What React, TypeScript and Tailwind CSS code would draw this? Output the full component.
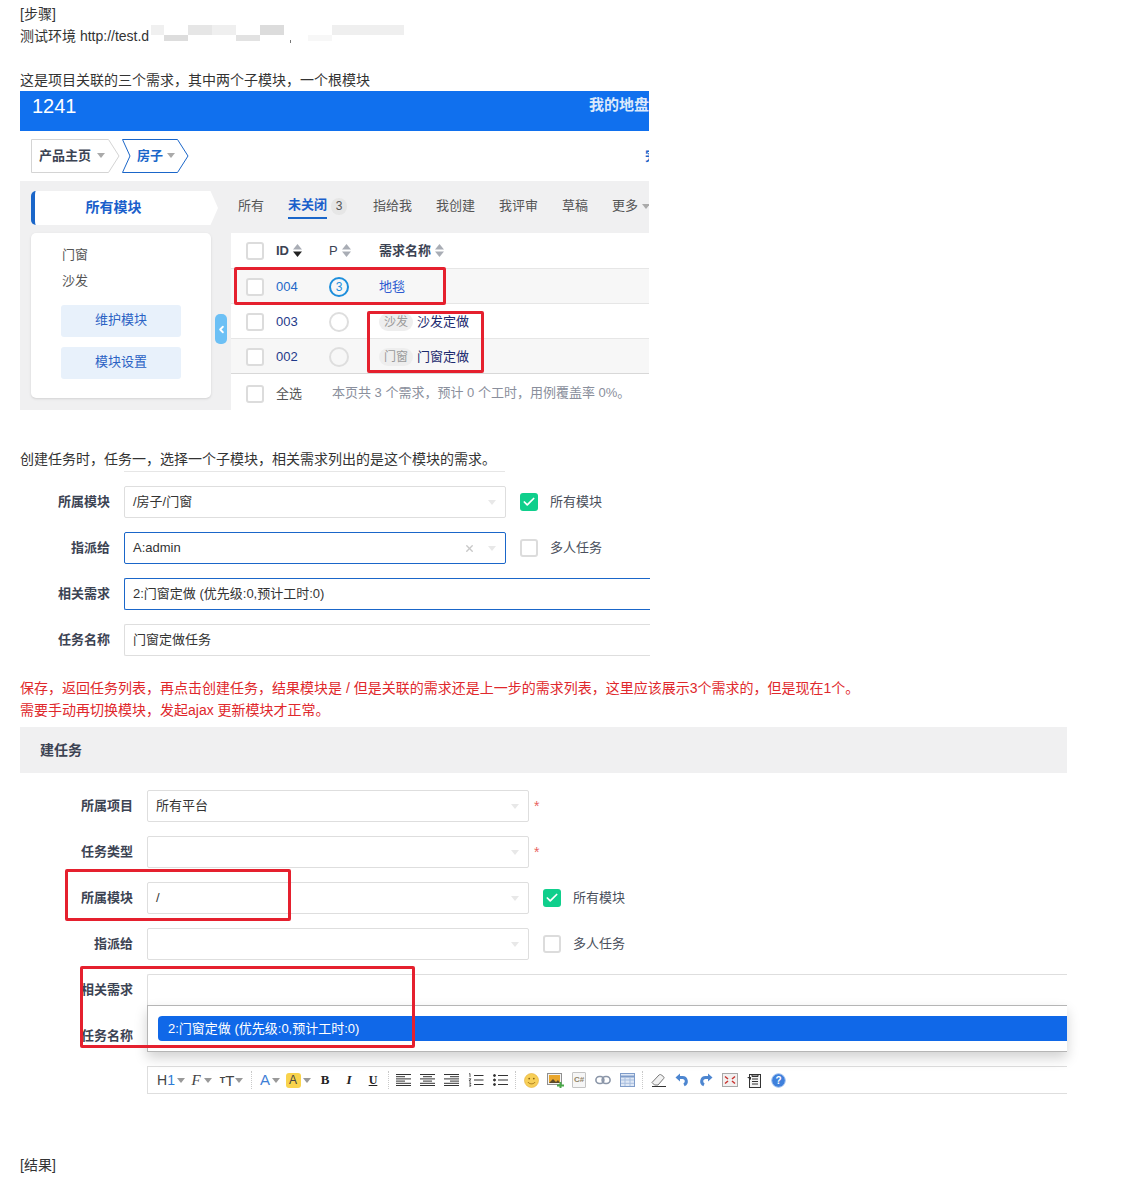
import { Check, ChevronLeft, X } from "lucide-react"

function Caret({ className = "text-[#c8c8c8]" }: { className?: string }) {
    return (
        <svg width="8" height="5" viewBox="0 0 8 5" className={`shrink-0 ${className}`}>
            <path d="M0 0h8L4 5z" fill="currentColor" />
        </svg>
    )
}

function Sort({ down = false }: { down?: boolean }) {
    return (
        <svg width="9" height="13" viewBox="0 0 9 13" className="ml-1 shrink-0">
            <path d="M0 5.5h9L4.5 0z" fill="#a9adb5" />
            <path d="M0 7.5h9L4.5 13z" fill={down ? "#222" : "#a9adb5"} />
        </svg>
    )
}

function Box({ checked = false }: { checked?: boolean }) {
    if (checked) {
        return (
            <span className="flex h-[18px] w-[18px] shrink-0 items-center justify-center rounded-[3px] bg-[#0fcf8c]">
                <Check size={14} strokeWidth={3} className="text-white" />
            </span>
        )
    }
    return <span className="block h-[18px] w-[18px] shrink-0 rounded-[3px] border-2 border-[#dcdcdc] bg-white" />
}

function Select({ value, focus = false, clear = false }: { value?: string; focus?: boolean; clear?: boolean }) {
    return (
        <div className={`flex h-[32px] w-[382px] shrink-0 items-center rounded-[2px] border bg-white pl-[8px] pr-[9px] text-[13px] text-[#333] ${focus ? "border-[#1a66c9]" : "border-[#dedede]"}`}>
            <span className="flex-1">{value}</span>
            {clear && <X size={11} strokeWidth={3} className="mr-[13px] text-[#c8c8c8]" />}
            <Caret className="text-[#e8e8e8]" />
        </div>
    )
}

function Row({ label, labelWidth, children }: { label: string; labelWidth: string; children?: React.ReactNode }) {
    return (
        <div className="flex h-[32px] items-center">
            <span className={`${labelWidth} mr-[14px] shrink-0 whitespace-nowrap text-right text-[13px] font-bold text-[#3c4353]`}>{label}</span>
            {children}
        </div>
    )
}

function CheckLabel({ label, checked = false }: { label: string; checked?: boolean }) {
    return (
        <div className="ml-[14px] flex items-center gap-[12px] text-[13px] text-[#4a4f5c]">
            <Box checked={checked} />
            <span>{label}</span>
        </div>
    )
}

function Star() {
    return <span className="ml-[5px] text-[14px] text-[#e8645f]">*</span>
}

function TableRow({ id, idColor, pri, shade = false, children }: { id: string; idColor: string; pri?: string; shade?: boolean; children: React.ReactNode }) {
    return (
        <div className={`flex h-[35px] items-center border-t border-[#e6e6e6] pl-[15px] pt-[1px] text-[13px] ${shade ? "bg-[#f7f7f7]" : "bg-white"}`}>
            <Box />
            <span className={`ml-[12px] w-[53px] ${idColor}`}>{id}</span>
            {pri ? (
                <span className="flex h-[20px] w-[20px] items-center justify-center rounded-full border-2 border-[#1e8fdc] text-[12px] text-[#1e8fdc]">{pri}</span>
            ) : (
                <span className="block h-[20px] w-[20px] rounded-full border-2 border-[#dedede]" />
            )}
            <span className="ml-[30px] flex items-center">{children}</span>
        </div>
    )
}

function ModuleTag({ name }: { name: string }) {
    return <span className="mr-[4px] rounded-full bg-[#eeeeee] px-[5px] text-[12px] leading-[18px] text-[#9a9a9a]">{name}</span>
}

function Lines({ rows, className = "text-[#333]" }: { rows: [number, number][]; className?: string }) {
    return (
        <svg width="16" height="14" viewBox="0 0 16 14" className={className}>
            {rows.map(([a, b], i) => (
                <path key={i} d={`M${a} ${1.5 + i * 2.2}H${b}`} stroke="currentColor" strokeWidth="1" />
            ))}
        </svg>
    )
}

function Sep({ className = "mx-[3px]" }: { className?: string }) {
    return <span className={`${className} h-[18px] w-0 shrink-0 border-l border-dotted border-[#c9c9c9]`} />
}

function Tool({ w = "w-[24px]", children }: { w?: string; children: React.ReactNode }) {
    return <span className={`flex ${w} shrink-0 items-center justify-center`}>{children}</span>
}

function Toolbar() {
    const left: [number, number][] = [[0, 15], [0, 9], [0, 15], [0, 9], [0, 15], [0, 15]]
    const center: [number, number][] = [[0, 15], [3, 12], [0, 15], [3, 12], [0, 15], [0, 15]]
    const right: [number, number][] = [[0, 15], [6, 15], [0, 15], [6, 15], [0, 15], [0, 15]]
    return (
        <div className="flex h-[28px] items-center border border-r-0 border-[#dedede] bg-white pl-[8px] text-[#444]">
            <Tool w="w-[30px]">
                <span className="text-[14px]">H<span className="text-[#2d7bd6]">1</span></span>
                <span className="ml-[2px]"><Caret className="text-[#999]" /></span>
            </Tool>
            <Tool w="w-[31px]">
                <span className="[font-family:'Liberation_Serif',serif] text-[15px] italic">F</span>
                <span className="ml-[3px]"><Caret className="text-[#999]" /></span>
            </Tool>
            <Tool w="w-[29px]">
                <span className="text-[9px] font-bold leading-none">T</span>
                <span className="text-[15px] leading-none">T</span>
                <span className="ml-[1px]"><Caret className="text-[#999]" /></span>
            </Tool>
            <Sep className="mx-[5px]" />
            <Tool w="w-[26px]">
                <span className="text-[15px] text-[#3f7fd6]">A</span>
                <span className="ml-[2px]"><Caret className="text-[#999]" /></span>
            </Tool>
            <Tool w="w-[30px]">
                <span className="flex h-[15px] w-[15px] items-center justify-center rounded-[3px] bg-[#f9d34c] text-[12px]">A</span>
                <span className="ml-[2px]"><Caret className="text-[#999]" /></span>
            </Tool>
            <Tool><b className="[font-family:'Liberation_Serif',serif] text-[13px] text-[#222]">B</b></Tool>
            <Tool><b className="[font-family:'Liberation_Serif',serif] text-[13px] italic text-[#222]">I</b></Tool>
            <Tool><b className="[font-family:'Liberation_Serif',serif] text-[12px] text-[#222] underline">U</b></Tool>
            <Sep />
            <Tool><Lines rows={left} /></Tool>
            <Tool><Lines rows={center} /></Tool>
            <Tool><Lines rows={right} /></Tool>
            <Tool>
                <svg width="16" height="14" viewBox="0 0 16 14" fill="none" stroke="#333">
                    <path d="M6 2.5h9.5M6 7h9.5M6 11.5h9.5" />
                    <path d="M1 1l1-.5V4M.8 5.8h2.2L1 8h2M1 10h2L2 11.5l1 1.5H1" strokeWidth=".8" />
                </svg>
            </Tool>
            <Tool>
                <svg width="15" height="14" viewBox="0 0 15 14" fill="none" stroke="#333">
                    <path d="M5 2.5h10M5 7h10M5 11.5h10" />
                    <circle cx="1.5" cy="2.5" r="1" fill="#333" />
                    <circle cx="1.5" cy="7" r="1" fill="#333" />
                    <circle cx="1.5" cy="11.5" r="1" fill="#333" />
                </svg>
            </Tool>
            <Sep />
            <Tool>
                <svg width="15" height="15" viewBox="0 0 15 15">
                    <circle cx="7.5" cy="7.5" r="7" fill="#f7cf58" stroke="#e4ad34" strokeWidth=".6" />
                    <circle cx="5.2" cy="5.6" r=".9" fill="#8a6414" />
                    <circle cx="9.8" cy="5.6" r=".9" fill="#8a6414" />
                    <path d="M4 9c1 2.4 6 2.4 7 0" fill="none" stroke="#a4761a" />
                </svg>
            </Tool>
            <Tool>
                <svg width="17" height="15" viewBox="0 0 17 15">
                    <rect x=".5" y=".5" width="14" height="11" fill="#f3f3f3" stroke="#8f8f8f" />
                    <rect x="2" y="2" width="11" height="8" fill="#e9a62c" />
                    <path d="M2 10l4-4 3 3 2-2 2 3z" fill="#5d4a2a" />
                    <path d="M10 11.5h2.5V9h2v2.5H17v2h-2.500V15h-2v-1.500H10z" fill="#4aa84a" />
                </svg>
            </Tool>
            <Tool>
                <span className="flex h-[16px] w-[14px] items-center justify-center rounded-[1px] border border-[#c4c4c4] bg-[#f6f6f6] text-[8px] font-bold text-[#8f8468]">C#</span>
            </Tool>
            <Tool>
                <svg width="16" height="10" viewBox="0 0 16 10" fill="none" stroke="#8b96a8" strokeWidth="1.600">
                    <rect x=".9" y="1.500" width="8" height="7" rx="3.500" />
                    <rect x="7.100" y="1.500" width="8" height="7" rx="3.500" />
                </svg>
            </Tool>
            <Tool>
                <svg width="15" height="14" viewBox="0 0 15 14">
                    <rect x=".5" y=".5" width="14" height="13" fill="#dfe8f5" stroke="#7f9cc9" />
                    <path d="M.5 3.500h14" stroke="#7f9cc9" strokeWidth="2" />
                    <path d="M5 4v9M10 4v9M1 7h13M1 10.300h13" stroke="#a9bfdf" />
                </svg>
            </Tool>
            <Sep />
            <Tool>
                <svg width="15" height="14" viewBox="0 0 15 14">
                    <path d="M1 9.500l7-7.500c.8-.6 1.500-.6 2.200-.1l2.300 1.700c.7.6.7 1.300.1 2L7 12H3.500z" fill="#f2f2f2" stroke="#777" />
                    <path d="M1 13.500h14" stroke="#333" />
                </svg>
            </Tool>
            <Tool>
                <svg width="14" height="15" viewBox="0 0 14 15" fill="none">
                    <path d="M4 4.500h3.500a3.800 3.800 0 0 1 1.500 7.300" stroke="#4d86d0" strokeWidth="3" />
                    <path d="M5 .5v8L.5 4.500z" fill="#4d86d0" />
                </svg>
            </Tool>
            <Tool>
                <svg width="14" height="15" viewBox="0 0 14 15" fill="none">
                    <path d="M10 4.500H6.500a3.800 3.800 0 0 0-1.500 7.300" stroke="#4d86d0" strokeWidth="3" />
                    <path d="M9 .5v8l4.500-4z" fill="#4d86d0" />
                </svg>
            </Tool>
            <Tool>
                <svg width="16" height="14" viewBox="0 0 16 14">
                    <rect x=".5" y=".5" width="15" height="13" fill="#f2f0f0" stroke="#a8a8a8" />
                    <path d="M3 3.500l3 2.500M13 3.500l-3 2.500M3 10.500l3-2.500M13 10.500l-3-2.500" stroke="#c8332f" strokeWidth="1.500" />
                </svg>
            </Tool>
            <Tool>
                <svg width="14" height="15" viewBox="0 0 14 15">
                    <rect x="2.500" y="1.500" width="11" height="13" fill="#f3f3f3" stroke="#333" />
                    <path d="M5 1.500h6v2H5zM5 6h6M5 8.500h6M5 11h6" stroke="#333" fill="#999" />
                    <path d="M0 4l4 3v-3z" fill="#333" />
                </svg>
            </Tool>
            <Tool>
                <svg width="15" height="15" viewBox="0 0 15 15">
                    <circle cx="7.500" cy="7.500" r="6.800" fill="#3e80dc" stroke="#9fc0ee" />
                    <text x="7.500" y="11" textAnchor="middle" fontSize="10" fontWeight="bold" fill="#fff">?</text>
                </svg>
            </Tool>
        </div>
    )
}

function RedBox({ className }: { className: string }) {
    return <div className={`pointer-events-none absolute z-20 rounded-[2px] border-[3px] border-[#e5202e] ${className}`} />
}

export default function App() {
    return (
        <div className="relative min-h-[1179px] w-[1136px] overflow-hidden bg-white pl-[20px] pt-[3px] text-[14px] leading-[22px] text-[#333] [font-family:'Liberation_Sans','Noto_Sans_CJK_SC',sans-serif]">
            <div>[步骤]</div>
            <div className="relative">
                测试环境 http://test.d
                {/* redacted host */}
                <svg width="260" height="22" viewBox="0 0 260 22" className="absolute left-[131px] top-0">
                    <rect x="0" y="0" width="13" height="10" fill="#f0f0f0" />
                    <rect x="13" y="10" width="24" height="6" fill="#dddddd" />
                    <rect x="37" y="0" width="24" height="10" fill="#e6e6e6" />
                    <rect x="61" y="0" width="24" height="10" fill="#efefef" />
                    <rect x="85" y="10" width="24" height="6" fill="#e2e2e2" />
                    <rect x="109" y="0" width="24" height="10" fill="#dcdcdc" />
                    <rect x="139" y="15" width="1" height="3" fill="#777777" />
                    <rect x="157" y="10" width="24" height="6" fill="#f7f7f7" />
                    <rect x="181" y="0" width="72" height="10" fill="#efefef" />
                </svg>
            </div>
            <div className="h-[22px]" />
            <div>这是项目关联的三个需求，其中两个子模块，一个根模块</div>

            {/* product page shot */}
            <div className="w-[629px] overflow-hidden">
                <div className="flex h-[40px] items-start justify-between bg-[#1070ee] pl-[12px] text-white">
                    <span className="text-[20px] leading-[30px]">1241</span>
                    <span className="w-[60px] overflow-hidden whitespace-nowrap pt-[3px] text-[15px] font-bold text-[#dce9fb]">我的地盘</span>
                </div>
                <div className="flex h-[50px] items-center pl-[11px]">
                    <div className="relative flex h-[34px] w-[89px] shrink-0 items-center pb-[1px] pl-[8px] text-[13px] font-bold text-[#3c4353]">
                        <svg width="89" height="34" viewBox="0 0 89 34" className="absolute left-0 top-0">
                            <path d="M.5.500h77L88 17 77.500 33.500H.5z" fill="#fff" stroke="#d4d4d4" />
                        </svg>
                        <span className="relative">产品主页</span>
                        <span className="relative ml-[6px]"><Caret className="text-[#aaa]" /></span>
                    </div>
                    <div className="relative ml-[2px] flex h-[34px] w-[67px] shrink-0 items-center pb-[1px] pl-[15px] text-[13px] font-bold text-[#1a66c9]">
                        <svg width="67" height="34" viewBox="0 0 67 34" className="absolute left-0 top-0">
                            <path d="M.5.500h55L66 17 55.500 33.500H.5L8 17z" fill="#fff" stroke="#1a66c9" />
                        </svg>
                        <span className="relative">房子</span>
                        <span className="relative ml-[4px]"><Caret className="text-[#aaa]" /></span>
                    </div>
                    <span className="ml-[456px] shrink-0 whitespace-nowrap pb-[1px] text-[13px] font-bold text-[#1a66c9]">完</span>
                </div>
                <div className="flex h-[229px] bg-[#f0f0f1]">
                    <div className="relative w-[211px] shrink-0 pl-[11px] pt-[10px]">
                        <div className="flex h-[34px] w-[187px] items-center justify-center rounded-l-[5px] border-l-4 border-[#1a66c9] bg-white pb-[2px] pr-[26px] text-[14px] font-bold text-[#1a5fcb] [clip-path:polygon(0_0,96%_0,100%_50%,96%_100%,0_100%)]">
                            所有模块
                        </div>
                        <div className="mt-[8px] h-[165px] w-[180px] rounded-[5px] bg-white pl-[31px] pt-[9px] text-[13px] leading-[26px] text-[#555] shadow-sm">
                            <div>门窗</div>
                            <div>沙发</div>
                            <div className="-ml-[1px] mt-[11px] flex h-[32px] w-[120px] items-center justify-center rounded-[3px] bg-[#e8f1fb] pb-[2px] text-[#2b62c4]">维护模块</div>
                            <div className="-ml-[1px] mt-[10px] flex h-[32px] w-[120px] items-center justify-center rounded-[3px] bg-[#e8f1fb] pb-[2px] text-[#2b62c4]">模块设置</div>
                        </div>
                        <div className="absolute left-[195px] top-[133px] flex h-[30px] w-[12px] items-center justify-center rounded-[5px] bg-[#6cc0f5] text-white">
                            <ChevronLeft size={11} strokeWidth={4} />
                        </div>
                    </div>
                    <div className="min-w-0 flex-1">
                        <div className="flex h-[52px] items-center gap-[24px] pb-[2px] pl-[7px] text-[13px] text-[#555]">
                            <span className="shrink-0">所有</span>
                            <span className="flex shrink-0 items-center">
                                <span className="border-b-2 border-[#1a66c9] font-bold leading-[24px] text-[#1a5fcb]">未关闭</span>
                                <span className="ml-[4px] mr-[2px] flex h-[17px] w-[16px] items-center justify-center rounded-full bg-[#e6e6e6] text-[12px] text-[#555]">3</span>
                            </span>
                            <span className="shrink-0">指给我</span>
                            <span className="shrink-0">我创建</span>
                            <span className="shrink-0">我评审</span>
                            <span className="shrink-0">草稿</span>
                            <span className="flex shrink-0 items-center gap-[4px]">更多<Caret className="text-[#aaa]" /></span>
                        </div>
                        <div className="h-[177px] bg-white">
                            <div className="flex h-[35px] items-center pl-[15px] text-[13px] font-bold text-[#3c4353]">
                                <Box />
                                <span className="ml-[12px] flex w-[53px] items-center">ID<Sort down /></span>
                                <span className="flex w-[50px] items-center font-normal">P<Sort /></span>
                                <span className="flex items-center">需求名称<Sort /></span>
                            </div>
                            <TableRow id="004" idColor="text-[#2468c8]" pri="3" shade>
                                <span className="text-[#2d5bd0]">地毯</span>
                            </TableRow>
                            <TableRow id="003" idColor="text-[#1f3a8a]">
                                <ModuleTag name="沙发" />
                                <span className="text-[#1c2a6e]">沙发定做</span>
                            </TableRow>
                            <TableRow id="002" idColor="text-[#1f3a8a]" shade>
                                <ModuleTag name="门窗" />
                                <span className="text-[#1c2a6e]">门窗定做</span>
                            </TableRow>
                            <div className="flex h-[37px] items-center border-t border-[#d8d8d8] pl-[15px] pt-[4px] text-[13px]">
                                <Box />
                                <span className="ml-[12px] w-[56px] text-[#555]">全选</span>
                                <span className="-mt-[2px] whitespace-nowrap text-[#8a8f9c]">本页共 3 个需求，预计 0 个工时，用例覆盖率 0%。</span>
                            </div>
                        </div>
                    </div>
                </div>
            </div>

            <div className="mt-[38px]">创建任务时，任务一，选择一个子模块，相关需求列出的是这个模块的需求。</div>
            <div className="ml-[104px] mt-[1px] h-0 w-[381px] border-t border-[#e6e6e6]" />

            {/* first task form */}
            <div className="mt-[14px] flex w-[630px] flex-col gap-[14px] overflow-hidden">
                <Row label="所属模块" labelWidth="w-[90px]">
                    <Select value="/房子/门窗" />
                    <CheckLabel label="所有模块" checked />
                </Row>
                <Row label="指派给" labelWidth="w-[90px]">
                    <Select value="A:admin" focus clear />
                    <CheckLabel label="多人任务" />
                </Row>
                <Row label="相关需求" labelWidth="w-[90px]">
                    <div className="flex h-[32px] flex-1 items-center rounded-l-[2px] border border-r-0 border-[#1a66c9] pl-[8px] text-[13px]">2:门窗定做 (优先级:0,预计工时:0)</div>
                </Row>
                <Row label="任务名称" labelWidth="w-[90px]">
                    <div className="flex h-[32px] flex-1 items-center rounded-l-[2px] border border-r-0 border-[#dedede] pl-[8px] text-[13px]">门窗定做任务</div>
                </Row>
            </div>

            <div className="mt-[21px] whitespace-nowrap text-[#e0282c]">
                <div>保存，返回任务列表，再点击创建任务，结果模块是 / 但是关联的需求还是上一步的需求列表，这里应该展示3个需求的，但是现在1个。</div>
                <div>需要手动再切换模块，发起ajax 更新模块才正常。</div>
            </div>

            {/* second task form */}
            <div className="mt-[6px] flex h-[46px] w-[1047px] items-center bg-[#f0f0f1] pb-[1px] pl-[20px] text-[14px] font-bold text-[#3c4353]">建任务</div>
            <div className="mt-[17px] flex w-[1047px] flex-col gap-[14px]">
                <Row label="所属项目" labelWidth="w-[113px]">
                    <Select value="所有平台" />
                    <Star />
                </Row>
                <Row label="任务类型" labelWidth="w-[113px]">
                    <Select />
                    <Star />
                </Row>
                <Row label="所属模块" labelWidth="w-[113px]">
                    <Select value="/" />
                    <CheckLabel label="所有模块" checked />
                </Row>
                <Row label="指派给" labelWidth="w-[113px]">
                    <Select />
                    <CheckLabel label="多人任务" />
                </Row>
                <Row label="相关需求" labelWidth="w-[113px]">
                    <div className="relative z-10 h-[32px] flex-1 rounded-tl-[2px] border border-r-0 border-[#dedede] bg-white">
                        {/* open dropdown */}
                        <div className="absolute -left-[1px] right-0 top-[30px] h-[47px] border border-r-0 border-[#b5b5b5] bg-white pl-[10px] pt-[10px] shadow-[0_6px_12px_rgba(0,0,0,0.18)]">
                            <div className="flex h-[25px] items-center rounded-l-[4px] bg-[#1068e8] pl-[10px] text-[13px] text-white">2:门窗定做 (优先级:0,预计工时:0)</div>
                        </div>
                    </div>
                </Row>
                <Row label="任务名称" labelWidth="w-[113px]" />
                <div className="pl-[127px]">
                    <Toolbar />
                </div>
            </div>

            <div className="mt-[60px]">[结果]</div>

            <RedBox className="left-[234px] top-[267px] h-[38px] w-[212px]" />
            <RedBox className="left-[367px] top-[311px] h-[62px] w-[117px]" />
            <RedBox className="left-[65px] top-[869px] h-[52px] w-[226px]" />
            <RedBox className="left-[80px] top-[966px] h-[82px] w-[335px]" />
        </div>
    )
}
